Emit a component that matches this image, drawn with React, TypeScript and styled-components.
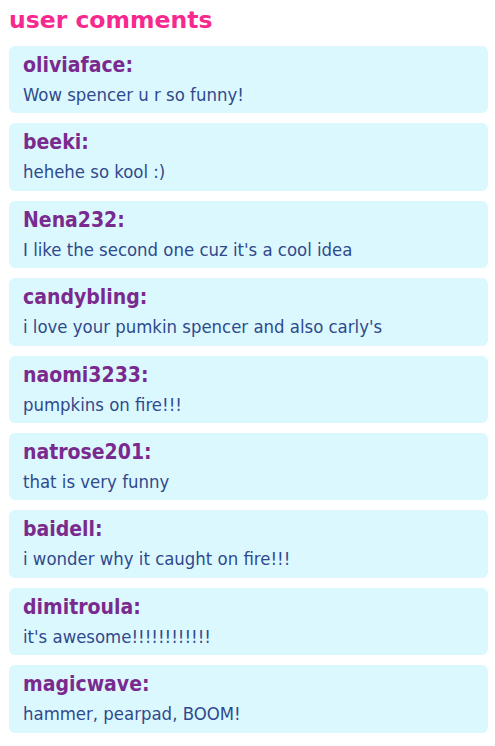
import React from "react";
import styled, { createGlobalStyle } from "styled-components";

const Global = createGlobalStyle`
  html, body { margin: 0; padding: 0; background: #ffffff; }
  body { font-family: "DejaVu Sans Condensed", "DejaVu Sans", Verdana, sans-serif; }
`;

const Page = styled.div`
  padding: 4px 7px 0 9px;
  display: flex;
  flex-direction: column;
`;

const Title = styled.h1`
  margin: 0 0 10px 0;
  font-family: "Comic Sans MS", "DejaVu Sans", sans-serif;
  font-weight: bold;
  font-size: 23.5px;
  line-height: 32px;
  color: #f7288e;
`;

const List = styled.div`
  display: flex;
  flex-direction: column;
  gap: 10px;
`;

const Card = styled.div`
  background: #dcf8ff;
  border-radius: 6px;
  padding: 7px 14px 0 14px;
  height: 67.4px;
  box-sizing: border-box;
  display: flex;
  flex-direction: column;
  gap: 6px;
`;

const User = styled.div`
  font-weight: bold;
  font-size: 21px;
  line-height: 24px;
  color: #7a2a8e;
`;

const Text = styled.div`
  font-size: 18.4px;
  line-height: 24px;
  color: #2f4a8c;
`;

const comments = [
  ["oliviaface", "Wow spencer u r so funny!"],
  ["beeki", "hehehe so kool :)"],
  ["Nena232", "I like the second one cuz it's a cool idea"],
  ["candybling", "i love your pumkin spencer and also carly's"],
  ["naomi3233", "pumpkins on fire!!!"],
  ["natrose201", "that is very funny"],
  ["baidell", "i wonder why it caught on fire!!!"],
  ["dimitroula", "it's awesome!!!!!!!!!!!!"],
  ["magicwave", "hammer, pearpad, BOOM!"],
];

export default function App() {
  return (
    <Page>
      <Global />
      <Title>user comments</Title>
      <List>
        {comments.map(([u, t]) => (
          <Card key={u}>
            <User>{u}:</User>
            <Text>{t}</Text>
          </Card>
        ))}
      </List>
    </Page>
  );
}
